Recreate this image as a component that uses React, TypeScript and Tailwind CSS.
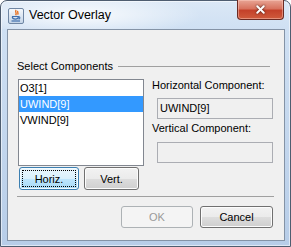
import { X } from 'lucide-react';

const btn = 'h-[22px] rounded-[3px] border text-[11px] leading-[20px] text-center';
const normalBtn =
  'text-black border-[#707070] bg-[linear-gradient(to_bottom,#f2f2f2_0%,#ebebeb_50%,#dddddd_51%,#cfcfcf_100%)] shadow-[inset_0_0_0_1px_#fcfcfc]';

function JavaIcon() {
  return (
    <svg width="16" height="16" viewBox="0 0 16 16">
      <defs>
        <linearGradient id="jbg" x1="0" y1="0" x2="0" y2="1">
          <stop offset="0" stopColor="#f7fafd" />
          <stop offset="1" stopColor="#c3d4e7" />
        </linearGradient>
      </defs>
      <rect x="0.5" y="0.5" width="15" height="15" rx="1.5" fill="url(#jbg)" stroke="#6f86a3" />
      <path d="M8.2 2c-2 1.8 1.4 2.8-0.6 5.2M10 3c-1.3 1.2 1 1.8-0.4 3.6" stroke="#e8701f" strokeWidth="1.4" fill="none" />
      <path d="M4 8.5h6.5c1.8 0 1.8 2.6 0 2.6M4.3 8.8c0 1.8 1.6 2.4 3.1 2.4s3-0.6 3-2.4" stroke="#3f6fae" strokeWidth="1.2" fill="none" />
      <path d="M3.5 13h8.5" stroke="#3f6fae" strokeWidth="1.2" />
    </svg>
  );
}

export default function App() {
  return (
    <div className="w-[291px] h-[247px] bg-white font-['Liberation_Sans',Arial,sans-serif]">
      <div className="relative w-[291px] h-[247px] rounded-t-[7px] border border-[#4e5d70] bg-[linear-gradient(to_bottom,#dbe8f6_0px,#cfe0f3_28px,#b7cde8_100%)] shadow-[inset_0_0_0_1px_rgba(255,255,255,0.55)]">
        {/* title bar */}
        <div className="h-[28px] flex items-center pl-[7px] pt-[1px] bg-[radial-gradient(ellipse_120px_22px_at_80px_14px,rgba(255,255,255,0.85),rgba(255,255,255,0)_100%)] rounded-t-[6px]">
          <JavaIcon />
          <span className="ml-[5px] text-[12.5px] text-black">Vector Overlay</span>
        </div>
        <div className="absolute top-[-1px] right-[6px] w-[47px] h-[20px] rounded-b-[4px] border border-[#6b2a22] border-t-0 bg-[linear-gradient(to_bottom,#e8a595_0%,#d8735f_45%,#c4412a_55%,#cf5b3c_100%)] shadow-[inset_0_0_0_1px_rgba(255,210,200,0.45)] flex items-center justify-center">
          <X className="w-[13px] h-[13px] text-white drop-shadow-[0_0_1px_#3a1a14]" strokeWidth={3.5} />
        </div>

        {/* content pane */}
        <div className="ml-[6px] w-[278px] h-[212px] border border-[#8493a6] bg-[#f0f0f0] text-[11px] text-black">
          <div className="mt-[30px] h-[13px] leading-[13px] flex items-center pl-[9px] pr-[14px]">
            <span>Select Components</span>
            <div className="ml-[5px] flex-1 h-px bg-[#a0a0a0]" />
          </div>

          <div className="mt-[6px] flex">
            <div className="ml-[10px] w-[126px]">
              <div className="h-[87px] border border-[#828790] bg-white leading-[16px]">
                <div className="h-[16px] pl-[1px]">O3[1]</div>
                <div className="h-[16px] pl-[1px] bg-[#3399ff] text-white">UWIND[9]</div>
                <div className="h-[16px] pl-[1px]">VWIND[9]</div>
              </div>
              <div className="mt-px flex">
                <button className={`${btn} text-black ml-px w-[60px] h-[23px] border-[#3c7fb1] bg-[linear-gradient(to_bottom,#eaf6fd_0%,#d9f0fc_50%,#bee6fd_51%,#a7d9f5_100%)] shadow-[inset_0_0_0_1px_#f4fbfe] outline-1 outline-dotted outline-black outline-offset-[-4px]`}>
                  Horiz.
                </button>
                <button className={`${btn} ${normalBtn} ml-[5px] w-[55px] h-[23px]`}>Vert.</button>
              </div>
            </div>

            <div className="ml-[8px] flex flex-col">
              <div className="h-[13px] leading-[13px]">Horizontal Component:</div>
              <div className="mt-[6px] ml-[5px] w-[116px] h-[21px] border border-[#abadb3] leading-[19px] pl-[2px]">
                UWIND[9]
              </div>
              <div className="mt-[3px] h-[13px] leading-[13px]">Vertical Component:</div>
              <div className="mt-[7px] ml-[5px] w-[116px] h-[21px] border border-[#abadb3]" />
            </div>
          </div>

          <div className="mt-[6px] ml-[9px] w-[257px] h-px bg-[#a0a0a0]" />

          <div className="mt-[9px] flex justify-end pr-[11px] gap-[7px]">
            <button className={`${btn} w-[72px] border-[#adb2b5] bg-[#f4f4f4] text-[#9a9a9a]`}>OK</button>
            <button className={`${btn} ${normalBtn} w-[73px]`}>Cancel</button>
          </div>
        </div>
      </div>
    </div>
  );
}
